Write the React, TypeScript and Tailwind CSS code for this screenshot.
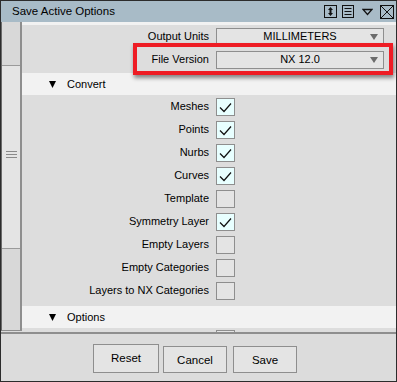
const font = { fontFamily: '"Liberation Sans", Arial, sans-serif' };

const SmallArrow = () => (
  <svg width="8" height="6" viewBox="0 0 8 6" className="absolute right-[5px] top-1/2 -translate-y-1/2">
    <path d="M0 0H8L4 6Z" fill="#6b6b6b" />
  </svg>
);

const Dropdown = ({ value }: { value: string }) => (
  <div className="relative w-[168px] h-[18px] border border-[#8e8e8e] bg-[#e4e4e4] flex items-center justify-center text-[11px] text-black">
    {value}
    <SmallArrow />
  </div>
);

const Check = ({ on }: { on: boolean }) => (
  <div
    className={`w-[19px] h-[18px] border border-[#8e8e8e] flex items-center justify-center ${
      on ? "bg-[#e8ffff]" : "bg-[#e4e4e4]"
    }`}
  >
    {on && (
      <svg width="17" height="16" viewBox="0 0 17 16">
        <path d="M3 8.5L7 12.5L14 4.5" fill="none" stroke="#111" strokeWidth="1.2" />
      </svg>
    )}
  </div>
);

const Row = ({ label, children }: { label: string; children: React.ReactNode }) => (
  <div className="h-[23px] flex items-center">
    <div className="w-[187px] text-right text-[11px] text-black">{label}</div>
    <div className="ml-[7px]">{children}</div>
  </div>
);

const SectionHeader = ({ title }: { title: string }) => (
  <div className="h-[22px] bg-[#f2f2f2] flex items-center text-[11px] text-black">
    <svg width="7" height="7" viewBox="0 0 7 7" className="ml-[27px]">
      <path d="M0 0H7L3.5 7Z" fill="#000" />
    </svg>
    <span className="ml-[11px]">{title}</span>
  </div>
);

const TitleIcons = () => (
  <div className="flex items-center gap-[5px] mr-[2px]">
    <svg width="13" height="13" viewBox="0 0 13 13">
      <rect x="0.5" y="0.5" width="12" height="12" fill="none" stroke="#111" />
      <path d="M6.5 2L9 5H4Z M6.5 11L9 8H4Z" fill="#111" />
      <rect x="5.5" y="4" width="2" height="5" fill="#111" />
    </svg>
    <svg width="12" height="13" viewBox="0 0 12 13">
      <rect x="0.5" y="0.5" width="11" height="12" fill="none" stroke="#111" />
      <path d="M2.5 3.5H9.5M2.5 6.5H9.5M2.5 9.5H9.5" stroke="#111" />
    </svg>
    <svg width="11" height="13" viewBox="0 0 11 13" className="ml-[3px]">
      <path d="M1 4.5H10L5.5 9.5Z" fill="none" stroke="#111" strokeWidth="1.3" />
    </svg>
    <svg width="14" height="14" viewBox="0 0 14 14" className="ml-[2px]">
      <rect x="0.5" y="0.5" width="13" height="13" fill="none" stroke="#111" />
      <path d="M1 1L13 13M13 1L1 13" stroke="#111" />
    </svg>
  </div>
);

const checks: [string, boolean][] = [
  ["Meshes", true],
  ["Points", true],
  ["Nurbs", true],
  ["Curves", true],
  ["Template", false],
  ["Symmetry Layer", true],
  ["Empty Layers", false],
  ["Empty Categories", false],
  ["Layers to NX Categories", false],
];

export default function App() {
  return (
    <div
      className="relative w-[397px] h-[382px] border border-[#2c2c2c] bg-[#dcdcdc] flex flex-col overflow-hidden"
      style={font}
    >
      {/* title bar */}
      <div className="h-[21px] bg-[#a8bbc7] flex items-center justify-between pl-[11px] text-[11.5px] text-black">
        <span>Save Active Options</span>
        <TitleIcons />
      </div>

      {/* body */}
      <div className="h-[310px] flex overflow-hidden">
        <div className="w-[21px] flex flex-col border-l border-[#6a6a6a] border-r-2 border-r-[#8e8e8e] border-b border-b-[#8e8e8e] h-[309px]">
          <div className="h-[43px] bg-[#d8d8d8]" />
          <div className="h-[184px] bg-[#e4e4e4] border-y border-[#9a9a9a] flex items-center justify-center">
            <svg width="11" height="7" viewBox="0 0 11 7" className="-mt-[6px]">
              <path d="M0 0.5H11M0 3.5H11M0 6.5H11" stroke="#8a8a8a" />
            </svg>
          </div>
          <div className="flex-1 bg-[#d8d8d8]" />
        </div>

        <div className="flex-1 flex flex-col bg-[#dddddd] overflow-hidden">
          <div className="h-[3px] bg-[#f2f2f2] shrink-0" />
          <Row label="Output Units">
            <Dropdown value="MILLIMETERS" />
          </Row>
          <Row label="File Version">
            <Dropdown value="NX 12.0" />
          </Row>
          <div className="h-[2px] shrink-0" />
          <SectionHeader title="Convert" />
          {checks.map(([label, on]) => (
            <Row key={label} label={label}>
              <Check on={on} />
            </Row>
          ))}
          <div className="h-[4px] shrink-0" />
          <SectionHeader title="Options" />
          <div className="h-[4px] shrink-0 flex items-end">
            <div className="ml-[194px] w-[19px] h-[2px] border border-b-0 border-[#8e8e8e] bg-[#e4e4e4]" />
          </div>
        </div>
      </div>

      <div className="h-[2px] bg-[#8e8e8e]" />

      {/* footer */}
      <div className="flex-1 flex items-start pt-[10px] pl-[92px] text-[11.5px] text-black">
        <button className="w-[66px] h-[29px] border border-[#8e8e8e] bg-[#e4e4e4]">Reset</button>
        <button className="ml-[4px] mt-[2px] w-[64px] h-[27px] border border-[#8e8e8e] bg-[#e4e4e4] pt-[2px]">Cancel</button>
        <button className="ml-[6px] mt-[2px] w-[64px] h-[27px] border border-[#8e8e8e] bg-[#e4e4e4] pt-[2px]">Save</button>
      </div>

      {/* red highlight */}
      <div className="absolute left-[132px] top-[42px] w-[260px] h-[32px] border-[4px] border-[#ee1c24] shadow-[1px_3px_4px_rgba(0,0,0,0.45)]" />
    </div>
  );
}
